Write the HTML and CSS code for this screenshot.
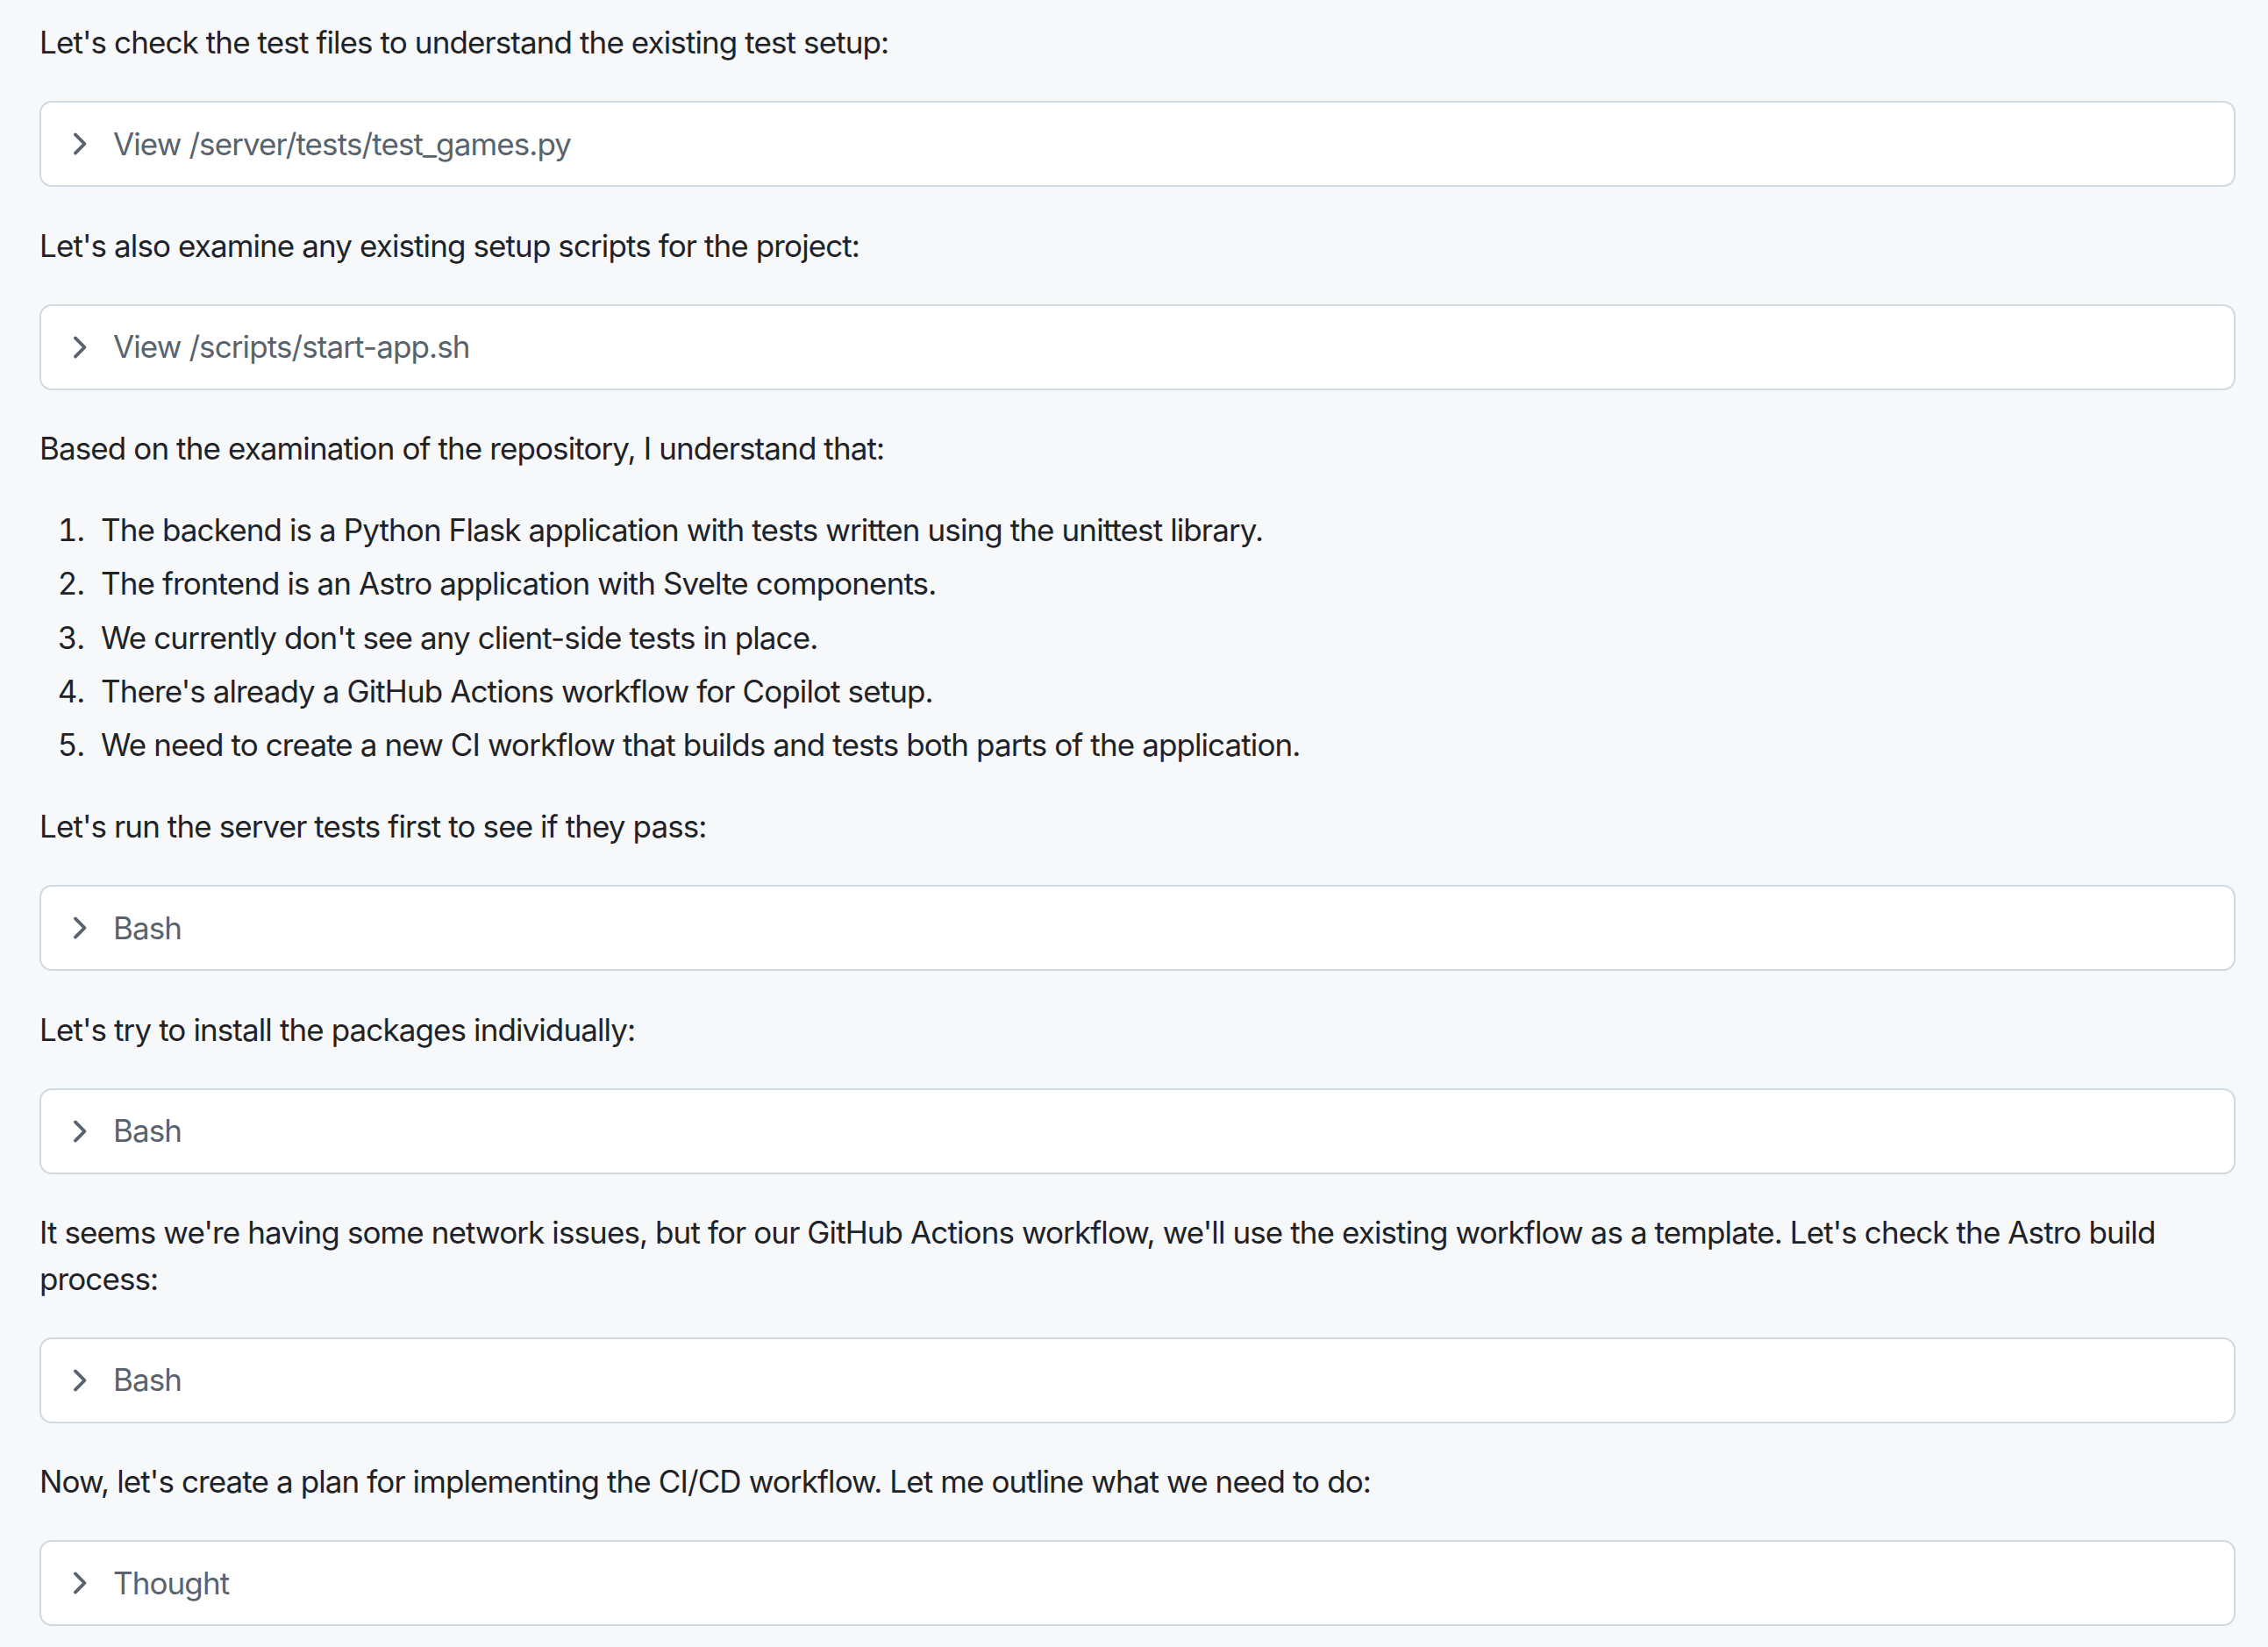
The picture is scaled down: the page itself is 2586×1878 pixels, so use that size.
FILE: index.html
```html
<!DOCTYPE html>
<html lang="en">
<head>
<meta charset="utf-8">
<title>Session log</title>
<link rel="stylesheet" href="styles.css">
</head>
<body>
<main class="log">
  <p class="msg">Let's check the test files to understand the existing test setup:</p>
  <div class="tool"><svg class="chev" viewBox="0 0 16 16" width="40" height="40"><path d="M6.22 3.22a.75.75 0 0 1 1.06 0l4.25 4.25a.75.75 0 0 1 0 1.06l-4.25 4.25a.751.751 0 0 1-1.042-.018.751.751 0 0 1-.018-1.042L9.94 8 6.22 4.28a.75.75 0 0 1 0-1.06Z"/></svg><span class="tool-label">View /server/tests/test_games.py</span></div>
  <p class="msg">Let's also examine any existing setup scripts for the project:</p>
  <div class="tool"><svg class="chev" viewBox="0 0 16 16" width="40" height="40"><path d="M6.22 3.22a.75.75 0 0 1 1.06 0l4.25 4.25a.75.75 0 0 1 0 1.06l-4.25 4.25a.751.751 0 0 1-1.042-.018.751.751 0 0 1-.018-1.042L9.94 8 6.22 4.28a.75.75 0 0 1 0-1.06Z"/></svg><span class="tool-label">View /scripts/start-app.sh</span></div>
  <p class="msg">Based on the examination of the repository, I understand that:</p>
  <ol class="msg-list">
    <li>The backend is a Python Flask application with tests written using the unittest library.</li>
    <li>The frontend is an Astro application with Svelte components.</li>
    <li>We currently don't see any client-side tests in place.</li>
    <li>There's already a GitHub Actions workflow for Copilot setup.</li>
    <li>We need to create a new CI workflow that builds and tests both parts of the application.</li>
  </ol>
  <p class="msg">Let's run the server tests first to see if they pass:</p>
  <div class="tool"><svg class="chev" viewBox="0 0 16 16" width="40" height="40"><path d="M6.22 3.22a.75.75 0 0 1 1.06 0l4.25 4.25a.75.75 0 0 1 0 1.06l-4.25 4.25a.751.751 0 0 1-1.042-.018.751.751 0 0 1-.018-1.042L9.94 8 6.22 4.28a.75.75 0 0 1 0-1.06Z"/></svg><span class="tool-label">Bash</span></div>
  <p class="msg">Let's try to install the packages individually:</p>
  <div class="tool"><svg class="chev" viewBox="0 0 16 16" width="40" height="40"><path d="M6.22 3.22a.75.75 0 0 1 1.06 0l4.25 4.25a.75.75 0 0 1 0 1.06l-4.25 4.25a.751.751 0 0 1-1.042-.018.751.751 0 0 1-.018-1.042L9.94 8 6.22 4.28a.75.75 0 0 1 0-1.06Z"/></svg><span class="tool-label">Bash</span></div>
  <p class="msg">It seems we're having some network issues, but for our GitHub Actions workflow, we'll use the existing workflow as a template. Let's check the Astro build process:</p>
  <div class="tool"><svg class="chev" viewBox="0 0 16 16" width="40" height="40"><path d="M6.22 3.22a.75.75 0 0 1 1.06 0l4.25 4.25a.75.75 0 0 1 0 1.06l-4.25 4.25a.751.751 0 0 1-1.042-.018.751.751 0 0 1-.018-1.042L9.94 8 6.22 4.28a.75.75 0 0 1 0-1.06Z"/></svg><span class="tool-label">Bash</span></div>
  <p class="msg">Now, let's create a plan for implementing the CI/CD workflow. Let me outline what we need to do:</p>
  <div class="tool"><svg class="chev" viewBox="0 0 16 16" width="40" height="40"><path d="M6.22 3.22a.75.75 0 0 1 1.06 0l4.25 4.25a.75.75 0 0 1 0 1.06l-4.25 4.25a.751.751 0 0 1-1.042-.018.751.751 0 0 1-.018-1.042L9.94 8 6.22 4.28a.75.75 0 0 1 0-1.06Z"/></svg><span class="tool-label">Thought</span></div>
</main>
</body>
</html>
```
FILE: styles.css
```css
html, body {
  margin: 0;
  padding: 0;
  background: #f6f8fa;
}
body {
  font-family: Inter, "Noto Sans", "Liberation Sans", sans-serif;
  font-size: 35px;
  line-height: 52.5px;
  color: #1f2328;
  letter-spacing: -0.9px;
}
.log {
  display: flex;
  flex-direction: column;
  gap: 40.5px;
  width: 2504px;
  padding: 22px 0 0 45px;
}
.msg {
  margin: 0;
}
.msg-list {
  margin: 0;
  padding-left: 70px;
}
.msg-list li::marker {
  content: counter(list-item) ".\2002\200A";
}
.msg-list li + li {
  margin-top: 8.75px;
}
.tool {
  box-sizing: border-box;
  height: 98px;
  display: flex;
  align-items: center;
  gap: 20px;
  padding: 0 22px;
  background: #ffffff;
  border: 2px solid #d1d9e0;
  border-radius: 14px;
  color: #59636e;
}
.chev {
  flex: none;
  fill: #59636e;
}
.tool-label {
  white-space: nowrap;
}
```
